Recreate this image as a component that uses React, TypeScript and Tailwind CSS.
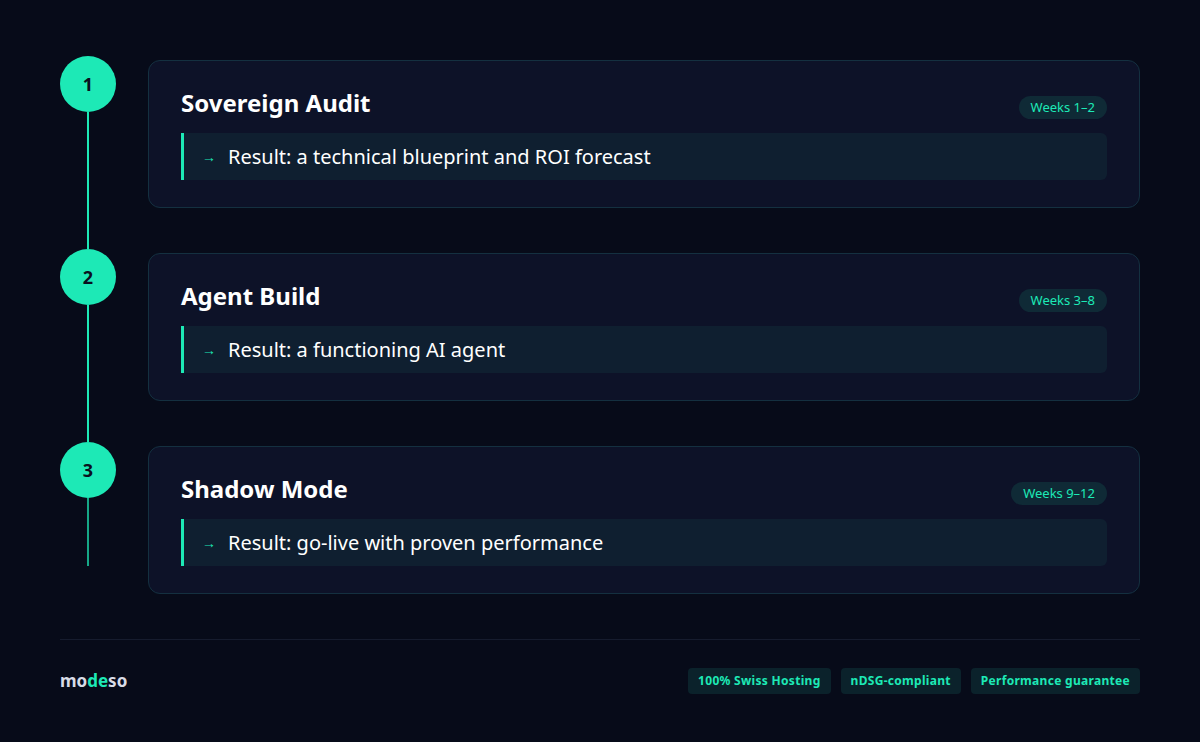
import React from 'react';

const steps = [
  { n: 1, title: 'Sovereign Audit', weeks: 'Weeks 1–2', result: 'Result: a technical blueprint and ROI forecast' },
  { n: 2, title: 'Agent Build', weeks: 'Weeks 3–8', result: 'Result: a functioning AI agent' },
  { n: 3, title: 'Shadow Mode', weeks: 'Weeks 9–12', result: 'Result: go-live with proven performance' },
];

const tags = ['100% Swiss Hosting', 'nDSG-compliant', 'Performance guarantee'];

export default function App() {
  return (
    <div className="w-[1200px] h-[742px] bg-[#070b19] px-[60px] pt-[56px] font-[family-name:'Liberation_Sans',Arial,sans-serif] overflow-hidden">
      <div className="flex flex-col">
        {steps.map((s, i) => {
          const last = i === steps.length - 1;
          return (
            <div key={s.n} className="flex items-stretch gap-8">
              <div className="flex w-14 shrink-0 flex-col items-center">
                <div className="flex h-14 w-14 shrink-0 items-center justify-center rounded-full bg-[#1de9b6] text-lg font-bold text-[#0a1020]">
                  {s.n}
                </div>
                <div className={`w-[2px] bg-[#1de9b6] ${last ? 'h-[68px] opacity-70' : 'flex-1'}`} />
              </div>
              <div className={`mt-1 h-[148px] flex-1 rounded-xl border border-[#143040] bg-[#0d1228] px-8 pt-[27px] ${last ? '' : 'mb-[41px]'}`}>
                <div className="mb-[15px] flex items-end justify-between">
                  <h3 className="text-2xl leading-[30px] font-bold text-white">{s.title}</h3>
                  <span className="mb-[-1px] rounded-full bg-[#0f2a36] px-3 py-[5px] text-[13px] leading-[13px] text-[#1de9b6]">{s.weeks}</span>
                </div>
                <div className="flex h-[47px] items-center gap-3 rounded-r-md border-l-[3px] border-[#1de9b6] bg-[#0f1f30] pl-[18px]">
                  <span className="text-sm text-[#1de9b6]">→</span>
                  <span className="text-xl text-white">{s.result}</span>
                </div>
              </div>
            </div>
          );
        })}
      </div>
      <div className="mt-[45px] flex items-center justify-between border-t border-[#161c2e] pt-[28px]">
        <div className="text-[17px] font-bold text-[#d8dce6]">
          mo<span className="text-[#1de9b6]">de</span>so
        </div>
        <div className="flex gap-[10px]">
          {tags.map(t => (
            <span key={t} className="rounded bg-[#0b222b] px-[10px] py-[5px] text-xs font-bold tracking-wide text-[#1de9b6]">{t}</span>
          ))}
        </div>
      </div>
    </div>
  );
}
